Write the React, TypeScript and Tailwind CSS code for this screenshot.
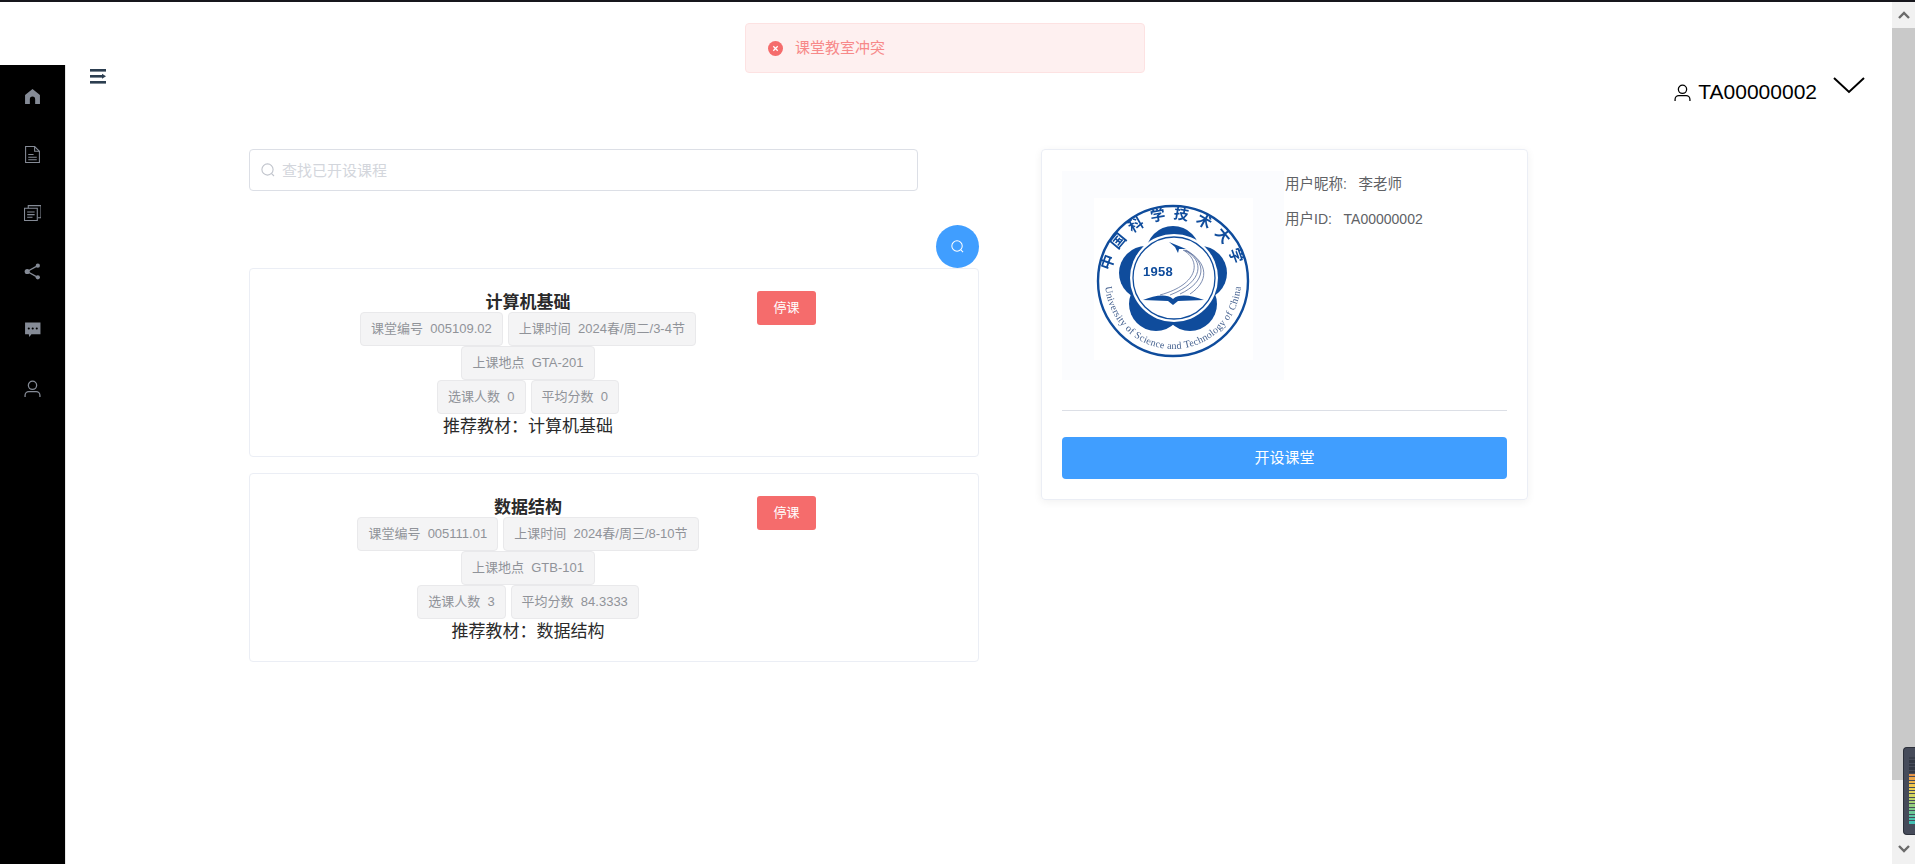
const navIcons = [
  <path key="home" d="M8 1 L15 6.5 V15 H10.5 V10.5 A2.5 2.5 0 0 0 5.5 10.5 V15 H1 V6.5 Z" fill="#858b96" />,
  <g key="doc" fill="none" stroke="#858b96" strokeWidth="1">
    <path d="M1.5 .5 H10 L14.5 5 V15.5 H1.5 Z" />
    <path d="M10 .5 V5 H14.5" />
    <path d="M4 8 H9 M4 10.5 H12 M4 13 H12" />
  </g>,
  <g key="copy" fill="none" stroke="#858b96" strokeWidth="1">
    <path d="M.5 4 H12.5 V15.5 H.5 Z" />
    <path d="M4 4 V1.5 H16 V13 H13" />
    <path d="M3 7.5 H10 M3 10 H10 M3 12.5 H8" />
  </g>,
  <g key="share" fill="#858b96" stroke="#858b96">
    <path d="M13 2.5 L3 8 L13 13.5" fill="none" strokeWidth="1.2" />
    <circle cx="13" cy="2.5" r="2" stroke="none" />
    <circle cx="3" cy="8" r="2.4" stroke="none" />
    <circle cx="13" cy="13.5" r="2" stroke="none" />
  </g>,
  <g key="chat">
    <path d="M1 1.5 H15.5 V12.5 H7 L5 15 L4.5 12.5 H1 Z" fill="#858b96" />
    <circle cx="4.5" cy="7" r="1" fill="#000" />
    <circle cx="8.2" cy="7" r="1" fill="#000" />
    <circle cx="12" cy="7" r="1" fill="#000" />
  </g>,
  <UserPaths key="user" stroke="#858b96" />,
];

const courses = [
  {
    title: "计算机基础",
    code: "005109.02",
    time: "2024春/周二/3-4节",
    place: "GTA-201",
    count: "0",
    score: "0",
  },
  {
    title: "数据结构",
    code: "005111.01",
    time: "2024春/周三/8-10节",
    place: "GTB-101",
    count: "3",
    score: "84.3333",
  },
];

const meterBars = [
  "#3a3f4c", "#333844", "#333844", "#333844", "#333844",
  "#e8964a", "#eda64a", "#eeb64c", "#efc650", "#ecd054", "#e2d45c", "#d2d562", "#bfd46a",
  "#a9d274", "#94cf80", "#80cc8c", "#6cc998", "#5ac6a4", "#4cc3ae", "#44c0b4",
];

function UserPaths({ stroke }: { stroke: string }) {
  return (
    <g fill="none" stroke={stroke} strokeWidth="1.2">
      <circle cx="8" cy="5" r="3.9" />
      <path d="M1 16 V14.5 A3.5 3.5 0 0 1 4.5 11 H11.5 A3.5 3.5 0 0 1 15 14.5 V16" />
    </g>
  );
}

function SearchIcon({ className, stroke }: { className: string; stroke: string }) {
  return (
    <svg className={className} viewBox="0 0 14 14" fill="none" stroke={stroke} strokeWidth="1.1">
      <circle cx="6.5" cy="6.5" r="5.6" />
      <path d="M10.6 10.6 L13 13" />
    </svg>
  );
}

function Tag({ label, value }: { label: string; value: string }) {
  return (
    <span className="flex h-[34px] items-center whitespace-pre rounded-[4px] border border-[#e9e9eb] bg-[#f4f4f5] px-[10px] text-[13px] text-[#909399]">
      {label}
      {"\u00a0\u00a0"}
      {value}
    </span>
  );
}

function CourseCard({ course }: { course: (typeof courses)[number] }) {
  return (
    <div className="box-border flex h-[189px] rounded-[4px] border border-[#ebeef5] pl-[49px] pt-[22px]">
      <div className="flex w-[458px] flex-col items-center">
        <div className="h-[21px] text-[17px] font-bold leading-[24px] text-[#2a2a2a]">{course.title}</div>
        <div className="flex gap-[5px]">
          <Tag label="课堂编号" value={course.code} />
          <Tag label="上课时间" value={course.time} />
        </div>
        <div className="flex gap-[5px]">
          <Tag label="上课地点" value={course.place} />
        </div>
        <div className="flex gap-[5px]">
          <Tag label="选课人数" value={course.count} />
          <Tag label="平均分数" value={course.score} />
        </div>
        <div className="text-[17px] leading-[26px] text-[#2a2a2a]">推荐教材：{course.title}</div>
      </div>
      <button className="h-[34px] w-[59px] rounded-[3px] bg-[#f56c6c] text-[13px] text-white">停课</button>
    </div>
  );
}

function UstcLogo() {
  return (
    <svg className="h-[162px] w-[159px] bg-white blur-[0.4px]" viewBox="0 0 159 162">
      <defs>
        <path id="arc-top" d="M16 84 A63 63 0 0 1 142 84" />
        <path id="arc-bottom" d="M11 83 A68 68 0 0 0 147 83" />
      </defs>
      <circle cx="79" cy="83" r="75" fill="none" stroke="#0f4c9c" strokeWidth="2.4" />
      <g fill="#0f4c9c">
        <circle cx="79" cy="55" r="27" />
        <circle cx="106" cy="75" r="27" />
        <circle cx="96" cy="106" r="27" />
        <circle cx="62" cy="106" r="27" />
        <circle cx="52" cy="75" r="27" />
        <circle cx="79" cy="80" r="36" />
      </g>
      <circle cx="80" cy="80" r="44" fill="#fff" />
      <circle cx="80" cy="80" r="41" fill="none" stroke="#0f4c9c" strokeWidth="1.3" />
      <g fill="none" stroke="#5a6f9c" strokeWidth="0.8">
        <path d="M89 52 C107 62 106 86 66 97" />
        <path d="M90 52 C111 62 110 84 76 97" />
        <path d="M91 52 C114 64 112 84 86 96" />
        <path d="M92 52 C116 66 114 84 96 96" />
      </g>
      <path d="M75 44 L92 51 L85 51 L84 55 L81 49 Z" fill="#0f4c9c" />
      <path d="M49 102 C60 98 72 95 79 101 C86 95 98 98 110 102 L84 103 L79 107 L74 103 Z" fill="#0f4c9c" />
      <text x="49" y="78" fill="#0f4c9c" className="font-['Liberation_Sans',sans-serif] text-[13px] font-bold tracking-[0.3px]">
        1958
      </text>
      <text fill="#0f4c9c" textAnchor="middle" className="font-['Noto_Sans_CJK_SC',sans-serif] text-[15px] font-bold tracking-[7px]">
        <textPath href="#arc-top" startOffset="50%">
          中国科学技术大学
        </textPath>
      </text>
      <text fill="#45618f" textAnchor="middle" className="font-['Liberation_Serif',serif] text-[10px] tracking-[0.25px]">
        <textPath href="#arc-bottom" startOffset="50%">
          University of Science and Technology of China
        </textPath>
      </text>
    </svg>
  );
}

function ProfileCard() {
  return (
    <div className="box-border h-[351px] w-[487px] rounded-[4px] border border-[#ebeef5] px-[20px] pt-[21px] shadow-[0_2px_8px_rgba(0,0,0,0.06)]">
      <div className="flex gap-[1px]">
        <div className="box-border flex h-[209px] w-[222px] justify-center bg-[#fbfcfe] pt-[27px]">
          <UstcLogo />
        </div>
        <div className="flex flex-col gap-[15px] pt-[3px] text-[14px] leading-[20px] text-[#606266]">
          <div className="whitespace-pre">
            <span className="text-[14.5px]">用户昵称</span>:{"\u00a0\u00a0\u00a0"}
            <span className="text-[14.5px]">李老师</span>
          </div>
          <div className="whitespace-pre">
            <span className="text-[14.5px]">用户</span>ID:{"\u00a0\u00a0\u00a0"}TA00000002
          </div>
        </div>
      </div>
      <div className="mt-[30px] h-px bg-[#dcdfe6]" />
      <button className="mt-[26px] h-[42px] w-full rounded-[4px] bg-[#409eff] text-[15px] text-white">开设课堂</button>
    </div>
  );
}

function FakeScrollbar() {
  return (
    <div className="relative flex w-[23px] flex-col bg-[#f1f1f1]">
      <div className="flex h-[26px] items-center justify-center">
        <svg className="h-[8px] w-[12px]" viewBox="0 0 12 8" fill="none" stroke="#6b6b6b" strokeWidth="2.4">
          <path d="M1 7 L6 2 L11 7" />
        </svg>
      </div>
      <div className="h-[752px] bg-[#c9c9c9]" />
      <div className="flex-1" />
      <div className="flex h-[19px] items-start justify-center">
        <svg className="h-[8px] w-[12px]" viewBox="0 0 12 8" fill="none" stroke="#6b6b6b" strokeWidth="2.4">
          <path d="M1 1 L6 6 L11 1" />
        </svg>
      </div>
      {/* floating meter widget that sits over the scrollbar */}
      <div className="absolute right-0 top-[745px] box-border flex h-[88px] w-[12px] flex-col gap-[1px] rounded-l-[4px] border border-r-0 border-[#2c303a] bg-[#464b5a] pl-[5px] pt-[9px]">
        {meterBars.map((color, i) => (
          <div key={i} className="h-[2.4px]" style={{ backgroundColor: color }} />
        ))}
      </div>
    </div>
  );
}

export default function App() {
  return (
    <div className="flex h-[864px] w-[1915px] flex-col overflow-hidden bg-white font-['Liberation_Sans','Noto_Sans_CJK_SC',sans-serif]">
      <div className="h-[2px] bg-[#16161c]" />
      <div className="flex min-h-0 flex-1">
        <div className="flex min-w-0 flex-1 flex-col">
          <div className="h-[63px]" />
          <div className="flex min-h-0 flex-1">
            <aside className="box-border flex w-[66px] flex-col items-center border-r border-[#e6e6e6] bg-black pr-[1px] pt-[2px]">
              {navIcons.map((icon, i) => (
                <div key={i} className="flex h-[58.4px] items-center justify-center">
                  <svg className="h-[17px] w-[17px]" viewBox="0 0 16 16">
                    {icon}
                  </svg>
                </div>
              ))}
            </aside>
            <main className="flex min-w-0 flex-1 flex-col">
              <header className="flex h-[84px] pl-[24px] pr-[27px]">
                <svg className="mt-[4px] h-[15px] w-[16px]" viewBox="0 0 16 15" fill="#2c3e50">
                  <rect y="0" width="16" height="2.6" />
                  <rect y="6" width="13" height="2.6" />
                  <path d="M12 4.8 L16 7.3 L12 9.8 Z" />
                  <rect y="12" width="16" height="2.6" />
                </svg>
                <div className="ml-auto flex items-start">
                  <svg className="mt-[19px] h-[17px] w-[17px]" viewBox="0 0 16 16">
                    <UserPaths stroke="#000" />
                  </svg>
                  <span className="ml-[7px] mt-[15px] text-[21px] leading-[24px] text-black">TA00000002</span>
                  <svg className="ml-[16px] mt-[11px] h-[18px] w-[32px]" viewBox="0 0 32 18" fill="none" stroke="#000" strokeWidth="2">
                    <path d="M1 2 L16 16 L31 2" />
                  </svg>
                </div>
              </header>
              <div className="flex gap-[62px] pl-[183px]">
                <div className="flex w-[730px] flex-col">
                  <div className="relative w-[669px]">
                    <SearchIcon className="absolute left-[12px] top-[14px] h-[14px] w-[14px]" stroke="#c0c4cc" />
                    <input
                      className="box-border h-[42px] w-full rounded-[4px] border border-[#dcdfe6] pl-[32px] text-[15px] outline-none placeholder:text-[#d3d6dc]"
                      placeholder="查找已开设课程"
                      readOnly
                    />
                  </div>
                  <button className="ml-auto mt-[34px] flex h-[43px] w-[43px] items-center justify-center rounded-full bg-[#409eff]">
                    <SearchIcon className="h-[13px] w-[13px]" stroke="#fff" />
                  </button>
                  <div className="flex flex-col gap-[16px]">
                    {courses.map((course) => (
                      <CourseCard key={course.code} course={course} />
                    ))}
                  </div>
                </div>
                <ProfileCard />
              </div>
            </main>
          </div>
        </div>
        <FakeScrollbar />
      </div>
      <div className="fixed left-[745px] top-[23px] box-border flex h-[50px] w-[400px] items-center gap-[12px] rounded-[4px] border border-[#fde2e2] bg-[#fef0f0] pl-[22px] text-[15px] text-[#f78989]">
        <svg className="h-[15px] w-[15px]" viewBox="0 0 15 15">
          <circle cx="7.5" cy="7.5" r="7.5" fill="#f56c6c" />
          <path d="M5.3 5.3 L9.7 9.7 M9.7 5.3 L5.3 9.7" stroke="#fff" strokeWidth="1.3" />
        </svg>
        课堂教室冲突
      </div>
    </div>
  );
}
